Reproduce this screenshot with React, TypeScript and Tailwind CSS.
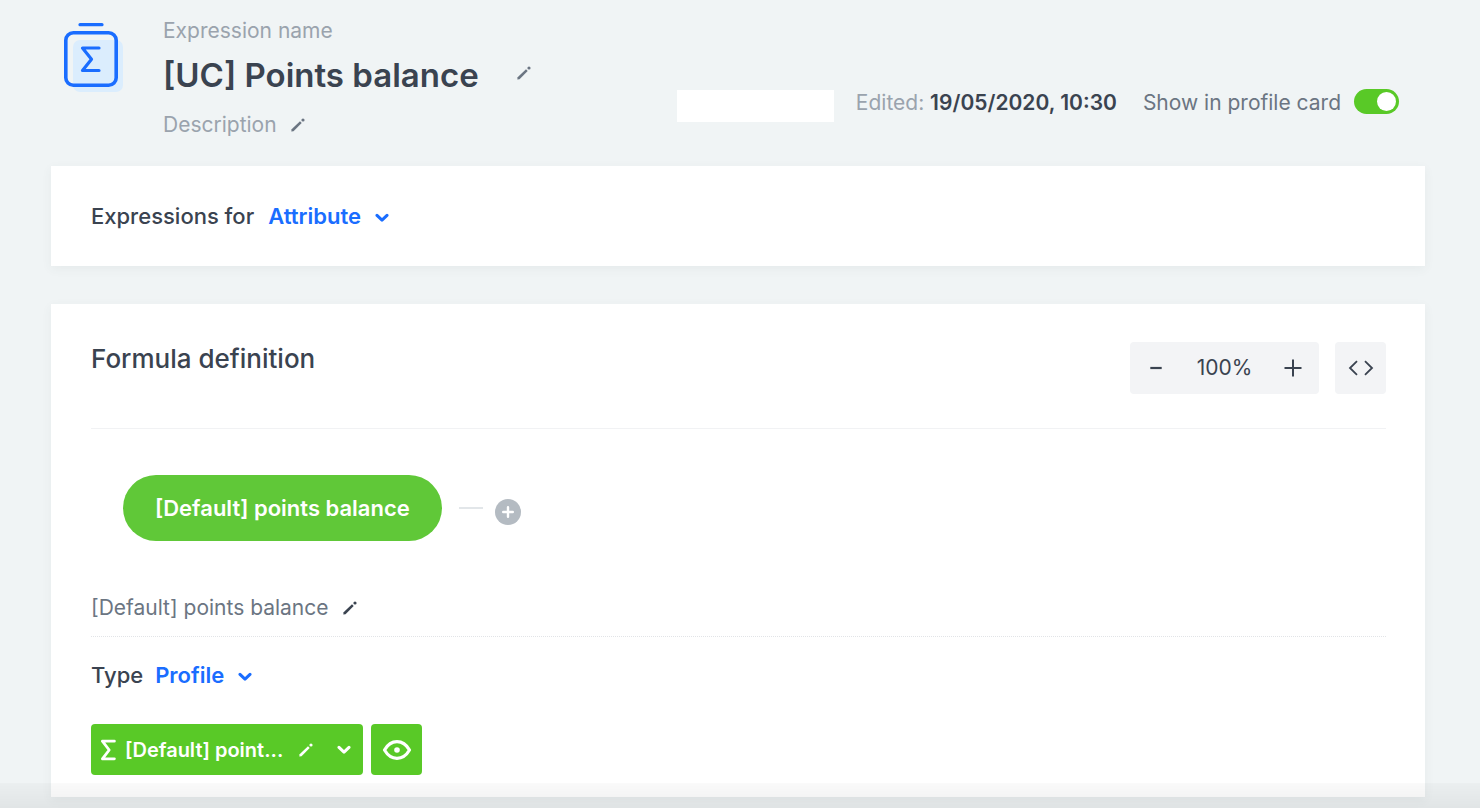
import React from "react";

function PencilIcon({ className = "" }: { className?: string }) {
  return (
    <svg width="14" height="14" viewBox="0 0 14 14" className={className}>
      <path d="M0.3 13.6 L0.6 11.2 L9 3.2 L10.7 4.9 L2.5 13.3 Z" fill="currentColor" />
      <circle cx="12" cy="2" r="1.6" fill="currentColor" />
    </svg>
  );
}

function ChevronIcon({ className = "" }: { className?: string }) {
  return (
    <svg width="14" height="10" viewBox="0 0 14 10" fill="none" className={className}>
      <path
        d="M2 2.4 L7 7.2 L12 2.4"
        stroke="currentColor"
        strokeWidth="3"
        strokeLinecap="round"
        strokeLinejoin="round"
      />
    </svg>
  );
}

function ExpressionIcon() {
  return (
    <svg width="60" height="70" viewBox="0 0 60 70" fill="none" className="shrink-0">
      <rect x="10" y="18" width="50" height="52" rx="7" fill="#dbedfd" />
      <rect x="2.8" y="10.8" width="50.4" height="52.4" rx="7.5" stroke="#1a6dff" strokeWidth="3.6" />
      <path d="M17 2.7 H39" stroke="#1a6dff" strokeWidth="3.2" strokeLinecap="round" />
      <path
        d="M36 26 H19.5 L28.5 37.2 L19.5 48.5 H36"
        stroke="#1a6dff"
        strokeWidth="3.2"
        strokeLinecap="round"
        strokeLinejoin="round"
      />
    </svg>
  );
}

function SelectLink({ id, options }: { id: string; options: string[] }) {
  return (
    <div className="relative flex items-center text-[#1a6dff]">
      <select
        id={id}
        className="appearance-none field-sizing-content bg-transparent pr-[28px] text-[22px] leading-[28px] font-semibold"
      >
        {options.map((option) => (
          <option key={option}>{option}</option>
        ))}
      </select>
      <ChevronIcon className="pointer-events-none absolute right-0 bottom-[7px]" />
    </div>
  );
}

function Header() {
  return (
    <header className="flex items-start justify-between pt-4 pr-[26px] pb-[26px] pl-3">
      <div className="flex gap-10">
        <div className="pt-[6px]">
          <ExpressionIcon />
        </div>
        <div>
          <p className="text-[21px] leading-[30px] text-[#9aa3ad]">Expression name</p>
          <div className="mt-2 flex items-center gap-[38px]">
            <h1 className="text-[33px] leading-[42px] font-semibold">[UC] Points balance</h1>
            <button aria-label="Edit name" className="pb-1 text-[#6b7582]">
              <PencilIcon />
            </button>
          </div>
          <div className="mt-[14px] flex items-center gap-[14px]">
            <p className="text-[21px] leading-[30px] text-[#9aa3ad]">Description</p>
            <button aria-label="Edit description" className="text-[#6b7582]">
              <PencilIcon />
            </button>
          </div>
        </div>
      </div>

      <div className="flex items-start pt-[70px] text-[21px] leading-[34px] whitespace-nowrap">
        <div className="mt-1 mr-[22px] h-8 w-[157px] bg-white" />
        <p className="mr-[26px] text-[#9aa3ad]">
          Edited: <span className="font-semibold text-[#3a4350]">19/05/2020, 10:30</span>
        </p>
        <label htmlFor="profile-card" className="mr-[13px] text-[#6b7582]">
          Show in profile card
        </label>
        <input
          id="profile-card"
          type="checkbox"
          role="switch"
          defaultChecked
          className="mt-[3px] flex h-[25px] w-[45px] appearance-none items-center justify-start rounded-full bg-[#b4bbc2] px-[3px] before:size-[19px] before:rounded-full before:bg-white checked:justify-end checked:bg-[#59c927]"
        />
      </div>
    </header>
  );
}

function ZoomControls() {
  return (
    <div className="flex gap-4 text-[#3a4350]">
      <div className="flex h-[52px] w-[189px] items-center justify-between rounded bg-[#f3f4f6] px-[17px]">
        <button aria-label="Zoom out">
          <svg width="18" height="18" viewBox="0 0 18 18">
            <path d="M3.3 9 H14.7" stroke="currentColor" strokeWidth="2.2" />
          </svg>
        </button>
        <span className="text-[21px]">100%</span>
        <button aria-label="Zoom in">
          <svg width="18" height="18" viewBox="0 0 18 18">
            <path d="M0.5 9 H17.5 M9 0.5 V17.5" stroke="currentColor" strokeWidth="2" />
          </svg>
        </button>
      </div>
      <button
        aria-label="Show code"
        className="flex h-[52px] w-[51px] items-center justify-center rounded bg-[#f3f4f6]"
      >
        <svg width="26" height="16" viewBox="0 0 26 16" fill="none">
          <path
            d="M9 1.2 L2 8 L9 14.8 M17 1.2 L24 8 L17 14.8"
            stroke="currentColor"
            strokeWidth="1.8"
          />
        </svg>
      </button>
    </div>
  );
}

function FormulaCard() {
  return (
    <section className="mt-[38px] bg-white pt-[38px] pr-[39px] pb-[22px] pl-10 shadow-[0_3px_10px_rgba(60,80,90,0.06)]">
      <div className="flex items-start justify-between border-b border-[#f1f2f4] pb-[34px]">
        <h2 className="text-[26px] leading-[34px] font-medium">Formula definition</h2>
        <ZoomControls />
      </div>

      <div className="flex items-center px-8 pt-[46px]">
        <button className="h-[66px] rounded-full bg-[#60c838] px-8 text-[22px] font-semibold text-white">
          [Default] points balance
        </button>
        <div className="ml-[17px] h-[2px] w-6 bg-[#e2e6e9]" />
        <button
          aria-label="Add element"
          className="mt-2 ml-3 flex size-[26px] items-center justify-center rounded-full bg-[#b4bbc2] text-white"
        >
          <svg width="12" height="12" viewBox="0 0 12 12">
            <path d="M1.2 6 H10.8 M6 1.2 V10.8" stroke="currentColor" strokeWidth="2.4" strokeLinecap="round" />
          </svg>
        </button>
      </div>

      <div className="mt-[52px] flex items-center gap-[14px] border-b border-dotted border-[#e2e4e7] pb-[13px]">
        <p className="text-[21px] leading-[30px] text-[#6b7582]">[Default] points balance</p>
        <button aria-label="Edit element name">
          <PencilIcon />
        </button>
      </div>

      <div className="mt-6 flex items-center gap-3">
        <label htmlFor="type" className="text-[22px] leading-[28px] font-medium">
          Type
        </label>
        <SelectLink id="type" options={["Profile", "Event"]} />
      </div>

      <div className="mt-[35px] flex gap-2 text-white">
        <div className="flex h-[51px] w-[272px] items-center rounded bg-[#59c927] pr-3 pl-[9px]">
          <svg width="16" height="22" viewBox="0 0 16 22" fill="none" className="shrink-0">
            <path
              d="M14.4 2.2 H2.4 L9.2 11 L2.4 19.8 H14.4"
              stroke="currentColor"
              strokeWidth="2.8"
              strokeLinecap="round"
              strokeLinejoin="round"
            />
          </svg>
          <span className="ml-[9px] text-[20px] font-semibold whitespace-nowrap">[Default] point...</span>
          <button aria-label="Edit expression" className="ml-auto">
            <PencilIcon />
          </button>
          <button aria-label="Choose expression" className="ml-6">
            <ChevronIcon />
          </button>
        </div>
        <button
          aria-label="Preview"
          className="flex h-[51px] w-[51px] items-center justify-center rounded bg-[#59c927]"
        >
          <svg width="30" height="22" viewBox="0 0 30 22" fill="none">
            <path
              d="M2.5 11 C6 5 10 2.7 15 2.7 C20 2.7 24 5 27.5 11 C24 17 20 19.3 15 19.3 C10 19.3 6 17 2.5 11 Z"
              stroke="currentColor"
              strokeWidth="3.2"
              strokeLinejoin="round"
            />
            <circle cx="15" cy="11" r="2.8" fill="currentColor" />
          </svg>
        </button>
      </div>
    </section>
  );
}

export default function App() {
  return (
    <div className="min-h-screen bg-[#f0f4f5] pr-[55px] pb-[11px] pl-[51px] font-[Inter,'Liberation_Sans',sans-serif] text-[#3a4350]">
      <Header />
      <section className="flex items-center gap-[14px] bg-white px-10 py-9 shadow-[0_3px_10px_rgba(60,80,90,0.06)]">
        <label htmlFor="expression-target" className="text-[22px] leading-[28px] font-medium">
          Expressions for
        </label>
        <SelectLink id="expression-target" options={["Attribute", "Event", "Profile"]} />
      </section>
      <FormulaCard />
      <div className="pointer-events-none fixed inset-x-0 bottom-0 h-[25px] bg-linear-to-b from-black/2 to-black/6" />
    </div>
  );
}
